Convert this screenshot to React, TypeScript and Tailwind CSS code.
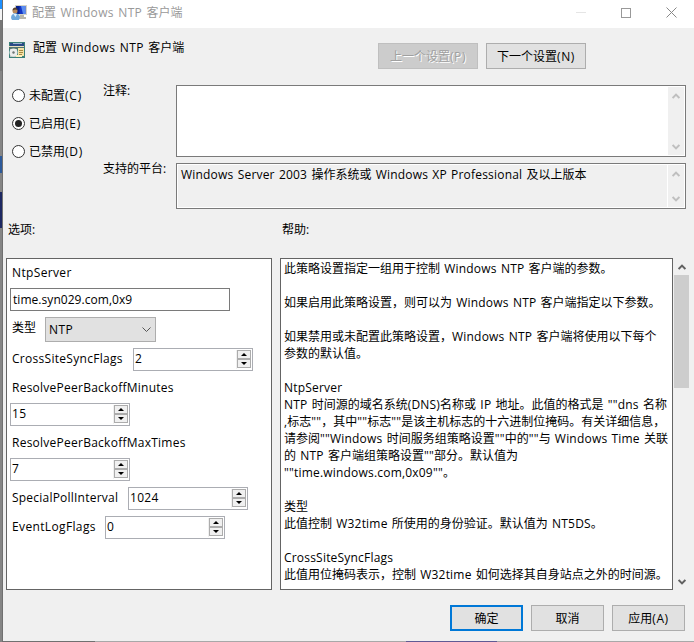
import React, { useState } from "react";
import clsx from "clsx";

const HELP_LINES = [
  "此策略设置指定一组用于控制 Windows NTP 客户端的参数。",
  "",
  "如果启用此策略设置，则可以为 Windows NTP 客户端指定以下参数。",
  "",
  "如果禁用或未配置此策略设置，Windows NTP 客户端将使用以下每个",
  "参数的默认值。",
  "",
  "NtpServer",
  'NTP 时间源的域名系统(DNS)名称或 IP 地址。此值的格式是 ""dns 名称',
  ',标志""，其中""标志""是该主机标志的十六进制位掩码。有关详细信息，',
  '请参阅""Windows 时间服务组策略设置""中的""与 Windows Time 关联',
  '的 NTP 客户端组策略设置""部分。默认值为',
  '""time.windows.com,0x09""。',
  "",
  "类型",
  "此值控制 W32time 所使用的身份验证。默认值为 NT5DS。",
  "",
  "CrossSiteSyncFlags",
  "此值用位掩码表示，控制 W32time 如何选择其自身站点之外的时间源。",
];

// Latin runs are tracked a little wider than the ideographs around them
function Label({ text, className, latin = "tracking-[0.2px]" }: { text: string; className?: string; latin?: string }) {
  return (
    <span className={clsx("whitespace-pre [word-spacing:0.9px]", className)}>
      {text.split(/([\x20-\x7e]+)/).map((part, i) => (
        <span key={i} className={i % 2 ? latin : undefined}>
          {part}
        </span>
      ))}
    </span>
  );
}

function Chevron({ up, className }: { up?: boolean; className?: string }) {
  return (
    <svg width="8" height="6" viewBox="0 0 8 6" fill="none" stroke="currentColor" strokeWidth="2" className={className}>
      <path d={up ? "M0.6 5 L4 1.6 L7.4 5" : "M0.6 1 L4 4.4 L7.4 1"} />
    </svg>
  );
}

function ComputerIcon() {
  return (
    <svg width="16" height="16" viewBox="0 0 16 16">
      <path d="M4 0h12v10H4z" fill="#d5d3c8" />
      <path d="M5 1h9.500v8H5z" fill="#1436c4" />
      <path d="M10 1h4.500v8H12z" fill="#5b8cf0" />
      <path d="M5 1h3.500v8H5z" fill="#06208c" />
      <path d="M9 10h4v2h2v2H8z" fill="#b9b7ab" />
      <circle cx="4" cy="6" r="2.500" fill="#b88a5c" />
      <path d="M1.500 5.500c0-4 5-4 5-0.500L4 4.500z" fill="#54402e" />
      <path d="M0 13c0-6 8-6 9-1l-1 3H1z" fill="#6fa8da" />
      <path d="M2.500 9l2 3 1.500-3z" fill="#e4f1fb" />
    </svg>
  );
}

function PolicyIcon() {
  return (
    <svg width="16" height="16" viewBox="0 0 16 16">
      <path d="M0 0h16v16H0z" fill="#3b7f78" />
      <path d="M1 1h14v3H1z" fill="#2b4a86" />
      <path d="M4 1h9v1H4z" fill="#9ab0cf" />
      <path d="M0 4h15v1H0z" fill="#e8dfbd" />
      <path d="M0 5h15v2H0z" fill="#52746f" />
      <path d="M1 7h7v8H1z" fill="#b9c4c2" />
      <circle cx="4.500" cy="10.500" r="4" fill="#ececec" />
      <circle cx="4.500" cy="10.500" r="1.200" fill="#6d7674" />
      <path d="M9 6h6v8H9z" fill="#f5e2a6" />
      <path d="M10 8.500h4M10 10.500h4M10 12.500h3" stroke="#a88943" />
      <path d="M7 13h6v2H7z" fill="#fff0c0" />
    </svg>
  );
}

function Radio({ label, checked, onSelect }: { label: string; checked: boolean; onSelect: () => void }) {
  return (
    <button onClick={onSelect} className="flex h-7 items-center gap-1">
      <span className="flex size-[13px] items-center justify-center rounded-full border border-[#333] bg-white">
        {checked && <span className="size-[7px] rounded-full bg-[#222]" />}
      </span>
      <Label text={label} latin="tracking-[0.8px]" />
    </button>
  );
}

function SpinnerButton({ up }: { up?: boolean }) {
  return (
    <button className="flex h-[9px] w-3.5 items-center justify-center border border-[#acacac] bg-[#f0f0f0]">
      <svg width="6" height="3" viewBox="0 0 6 3">
        <path d={up ? "M0 3L3 0L6 3z" : "M0 0L3 3L6 0z"} fill="#000" />
      </svg>
    </button>
  );
}

function Spinner({ value }: { value: string }) {
  return (
    <div className="flex h-[23px] w-[120px] justify-between border border-[#abadb3] bg-white pl-px">
      <Label text={value} latin="tracking-[0.3px]" className="leading-[20px]" />
      <div className="my-px mr-px border-l border-[#f0f0f0]">
        <SpinnerButton up />
        <SpinnerButton />
      </div>
    </div>
  );
}

function Button({ label, className }: { label: string; className?: string }) {
  return (
    <button className={clsx("flex h-[26px] items-center justify-center", className)}>
      <Label text={label} latin="tracking-[0.6px]" />
    </button>
  );
}

function TextBoxScroll() {
  return (
    <div className="flex w-4 flex-col items-center justify-between bg-[#f0f0f0] pb-[5px] pt-1.5 text-[#bfbfbf]">
      <Chevron up />
      <Chevron />
    </div>
  );
}

export default function App() {
  const [state, setState] = useState("enabled");

  return (
    <div className="flex h-[642px] w-[694px] overflow-hidden bg-[#f0f0f0] font-['Open_Sans','Noto_Sans_CJK_SC',sans-serif] text-[12px] leading-[17px] text-black">
      {/* Desktop showing at the window's left edge */}
      <div className="flex w-[3px] shrink-0 flex-col border-r border-[#707070] bg-[#858585]">
        <div className="h-[9px] bg-[#1e90ff]" />
        <div className="h-[11px] bg-[#f4f4f4]" />
        <div className="h-[51px] bg-[#777]" />
        <div className="h-[85px] bg-[#858585]" />
        <div className="h-[17px] bg-[#2d5a9a]" />
        <div className="h-[19px] bg-[#858585]" />
        <div className="h-[36px] bg-[#1d2862]" />
      </div>

      <div className="flex w-[691px] flex-col">
        {/* Title bar */}
        <div className="flex h-7 shrink-0 items-center bg-white pb-[3px] text-[#999]">
          <div className="ml-2">
            <ComputerIcon />
          </div>
          <Label text="配置 Windows NTP 客户端" className="ml-[5px]" latin="tracking-[0.35px]" />
          <div className="ml-auto mr-[17px] flex items-center gap-[35px]">
            <span className="h-px w-2.5 bg-[#e5e5e5]" />
            <span className="size-2.5 border border-[#999]" />
            <svg width="11" height="11" viewBox="0 0 11 11" stroke="#888" fill="none">
              <path d="M0.500 0.500L10.500 10.500M10.500 0.500L0.500 10.500" />
            </svg>
          </div>
        </div>

        {/* Setting name and navigation */}
        <div className="flex h-[53px] shrink-0">
          <div className="ml-1.5 mt-3.5">
            <PolicyIcon />
          </div>
          <Label text="配置 Windows NTP 客户端" className="ml-2 mt-[11px] w-[345px]" latin="tracking-[0.4px]" />
          <Button
            label="上一个设置(P)"
            className="mt-[15px] w-[100px] border border-[#bfbfbf] bg-[#ccc] text-[#a0a0a0] [text-shadow:1px_1px_0_#fff]"
          />
          <Button label="下一个设置(N)" className="ml-2 mt-[15px] w-[100px] border border-[#adadad] bg-[#e1e1e1]" />
        </div>

        {/* State, comment and supported platforms */}
        <div className="flex h-[137px] shrink-0">
          <div className="flex w-[100px] flex-col items-start pl-[9px]">
            <Radio label="未配置(C)" checked={state === "none"} onSelect={() => setState("none")} />
            <Radio label="已启用(E)" checked={state === "enabled"} onSelect={() => setState("enabled")} />
            <Radio label="已禁用(D)" checked={state === "disabled"} onSelect={() => setState("disabled")} />
          </div>
          <div className="flex w-[73px] flex-col">
            <Label text="注释:" className="mt-px h-[78px]" />
            <Label text="支持的平台:" />
          </div>
          <div className="flex w-[510px] flex-col gap-1.5 pt-1">
            <div className="flex h-[72px] justify-end border border-[#7a7a7a] bg-white p-px">
              <TextBoxScroll />
            </div>
            <div className="flex h-[46px] justify-between border border-[#7a7a7a] bg-white p-px">
              <div className="mr-px flex-1 bg-[#f0f0f0] pl-[3px] pt-px">
                <Label text="Windows Server 2003 操作系统或 Windows XP Professional 及以上版本" />
              </div>
              <TextBoxScroll />
            </div>
          </div>
        </div>

        <div className="flex h-10 shrink-0 pl-[5px] pt-[3px]">
          <Label text="选项:" className="w-[274px]" />
          <Label text="帮助:" />
        </div>

        <div className="flex h-[332px] shrink-0 pl-[3px]">
          {/* Options */}
          <div className="w-[266px] border border-[#646464] bg-white pl-[3px]">
            <Label text="NtpServer" latin="tracking-[0.35px]" className="block h-[29px] pl-0.5 pt-[5px]" />
            <div className="h-[23px] w-[220px] border border-[#7a7a7a] pl-0.5 leading-[21px]">
              <Label text="time.syn029.com,0x9" latin="tracking-[0.05px]" />
            </div>
            <div className="mt-1.5 flex h-[25px] pl-0.5">
              <Label text="类型" className="mt-0.5 w-[33px]" />
              <div className="flex w-[111px] items-center justify-between border border-[#adadad] bg-[#e1e1e1] pl-[3px] pr-1">
                <Label text="NTP" latin="tracking-[0.4px]" />
                <svg width="9" height="6" viewBox="0 0 9 6" fill="none" stroke="#555">
                  <path d="M0.500 0.500L4.500 4.500L8.500 0.500" />
                </svg>
              </div>
            </div>
            <div className="mt-1.5 flex h-[23px] pl-0.5">
              <Label text="CrossSiteSyncFlags" latin="tracking-[0.29px]" className="mt-0.5 w-[121px]" />
              <Spinner value="2" />
            </div>
            <Label text="ResolvePeerBackoffMinutes" latin="tracking-[0.25px]" className="block h-8 pl-0.5 pt-2" />
            <Spinner value="15" />
            <Label text="ResolvePeerBackoffMaxTimes" latin="tracking-[0.25px]" className="block h-8 pl-0.5 pt-2" />
            <Spinner value="7" />
            <div className="mt-1.5 flex h-[23px] pl-0.5">
              <Label text="SpecialPollInterval" latin="tracking-[0.22px]" className="mt-0.5 w-[116px]" />
              <Spinner value="1024" />
            </div>
            <div className="mt-1.5 flex h-[23px] pl-0.5">
              <Label text="EventLogFlags" latin="tracking-[0.36px]" className="mt-0.5 w-[93px]" />
              <Spinner value="0" />
            </div>
          </div>

          {/* Help */}
          <div className="ml-2 w-[393px] overflow-hidden border border-[#646464] bg-white pl-[3px] pt-px">
            {HELP_LINES.map((line, i) => (
              <Label key={i} text={line} className="block h-[17px]" />
            ))}
          </div>
          <div className="ml-px flex w-[15px] flex-col items-center pb-[5px] pt-1.5 text-[#606060]">
            <Chevron up />
            <div className="mt-[5px] h-[113px] w-full bg-[#cdcdcd]" />
            <Chevron className="mt-auto" />
          </div>
        </div>

        {/* Dialog buttons */}
        <div className="flex h-[51px] shrink-0 justify-end gap-2 pr-[9px] pt-[15px]">
          <Button label="确定" className="w-[73px] border-2 border-[#0078d7] bg-[#e1e1e1]" />
          <Button label="取消" className="w-[73px] border border-[#adadad] bg-[#e1e1e1]" />
          <Button label="应用(A)" className="w-[73px] border border-[#adadad] bg-[#e1e1e1]" />
        </div>
        <div className="flex h-px shrink-0">
          <div className="w-[92px] bg-[#707070]" />
          <div className="w-[311px] bg-[#a8a8a8]" />
          <div className="w-[91px] bg-[#5f5a94]" />
          <div className="flex-1 bg-[#a8a8a8]" />
        </div>
      </div>
    </div>
  );
}
